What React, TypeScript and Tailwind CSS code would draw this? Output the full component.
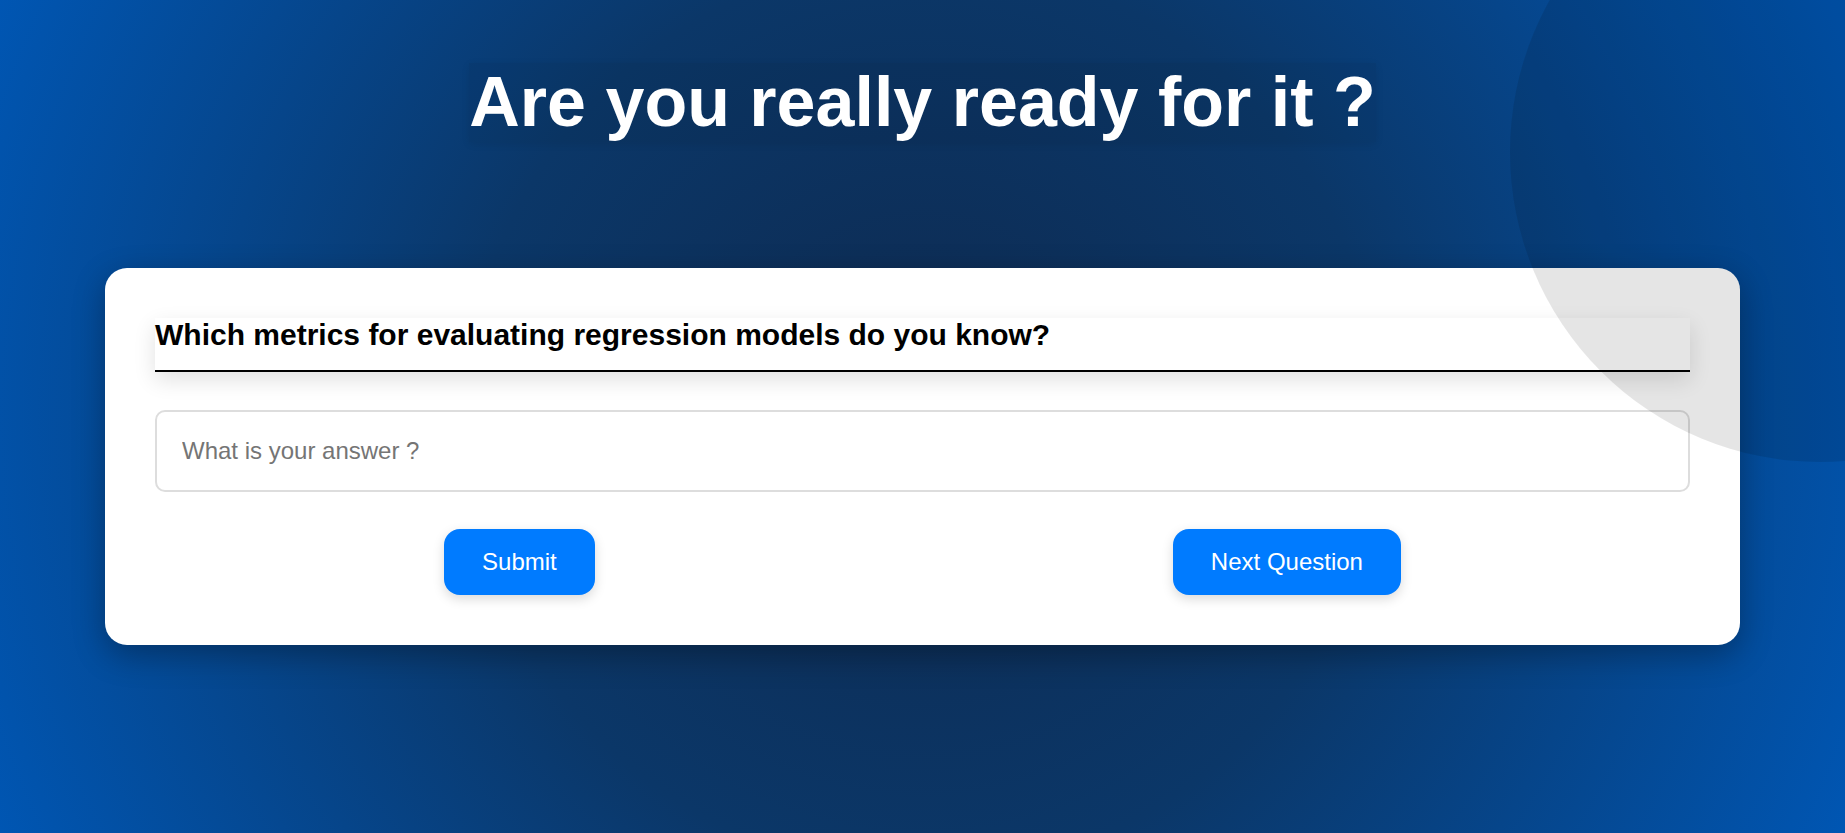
import { useState } from "react";

export default function App() {
    const [answer, setAnswer] = useState('')

    return (
        <div
            className="relative min-h-screen w-full overflow-hidden bg-[radial-gradient(circle,#0e2a50_0%,#0b3768_45%,#0056b3_100%)] pt-[63px] pb-[188px]"
            style={{ fontFamily: '"Liberation Sans", Arial, sans-serif' }}
        >
            <div className="flex justify-center">
                <h1 className="inline-block bg-black/[0.05] text-[70px] font-bold leading-[79px] text-white shadow-[0_2px_8px_rgba(0,0,0,0.08)]">
                    Are you really ready for it ?
                </h1>
            </div>

            <div className="mx-[105px] mt-[126px] rounded-[22px] bg-white p-[50px] shadow-[0_10px_32px_rgba(0,0,0,0.3)]">
                <h2 className="border-b-2 border-black bg-white pb-[18px] text-[30px] font-bold leading-[34px] text-black shadow-[0_8px_22px_rgba(0,0,0,0.12)]">
                    Which metrics for evaluating regression models do you know?
                </h2>

                <input
                    type="text"
                    value={answer}
                    onChange={(e) => setAnswer(e.target.value)}
                    placeholder="What is your answer ?"
                    className="mt-[38px] h-[82px] w-full rounded-[10px] border-2 border-[#dddddd] px-[25px] text-[24px] text-black placeholder:text-[#757575] focus:outline-none"
                />

                <div className="mt-[37px] flex justify-around">
                    <button className="rounded-[16px] bg-[#007bff] px-[38px] py-[19px] text-[24px] leading-[28px] text-white shadow-[0_4px_12px_rgba(0,0,0,0.15)] hover:bg-[#0069d9]">
                        Submit
                    </button>
                    <button className="rounded-[16px] bg-[#007bff] px-[38px] py-[19px] text-[24px] leading-[28px] text-white shadow-[0_4px_12px_rgba(0,0,0,0.15)] hover:bg-[#0069d9]">
                        Next Question
                    </button>
                </div>
            </div>

            {/* decorative circle, sits over the card */}
            <div className="pointer-events-none absolute left-[1510px] top-[-158px] h-[620px] w-[620px] rounded-full bg-black/10" />
        </div>
    )
}
